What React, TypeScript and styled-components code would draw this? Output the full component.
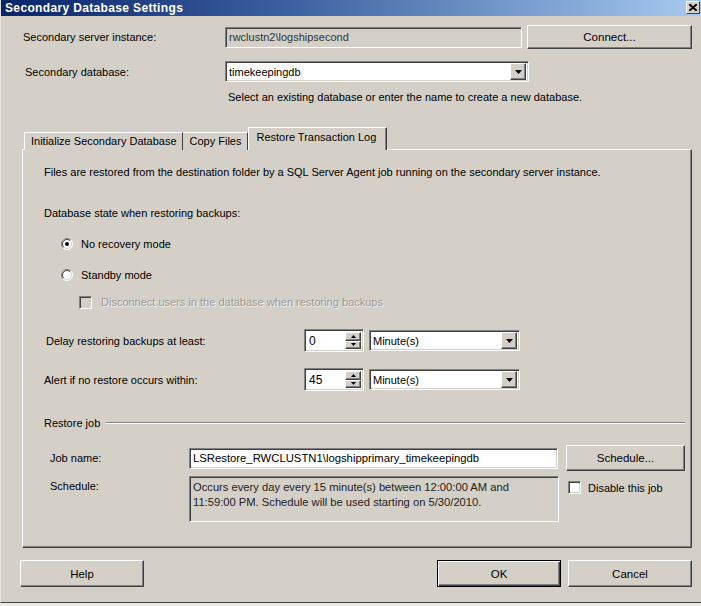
import React from "react";
import styled, { createGlobalStyle, css } from "styled-components";

const Global = createGlobalStyle`
  html, body { margin: 0; padding: 0; background: #ecebe8; }
  body {
    font-family: "Liberation Sans", Arial, sans-serif;
    font-size: 11px;
    color: #000;
  }
  * { box-sizing: border-box; }
`;

const Window = styled.div`
  width: 701px;
  height: 603px;
  background: #d4d0c8;
  border-left: 1px solid #e4e1db;
  border-bottom: 1px solid #404040;
  display: flex;
  flex-direction: column;
`;

const TitleBar = styled.div`
  height: 16px;
  flex: none;
  display: flex;
  align-items: center;
  justify-content: space-between;
  padding: 0 1px 0 4px;
  background: linear-gradient(to right, #0a246a 0%, #3a5f9f 40%, #a6caf0 100%);
  color: #fff;
  font-weight: bold;
  font-size: 12px;
  letter-spacing: 0.35px;
`;

const CloseBtn = styled.div`
  width: 14px;
  height: 13px;
  margin-top: -2px;
  background: #d4d0c8;
  border-top: 1px solid #fff;
  border-left: 1px solid #fff;
  border-right: 1px solid #404040;
  border-bottom: 1px solid #404040;
  display: flex;
  align-items: center;
  justify-content: center;
`;

const TopArea = styled.div`
  padding-left: 22px;
  display: flex;
  flex-direction: column;
`;

const Row = styled.div<{ $mt: number; $h: number }>`
  margin-top: ${(p) => p.$mt}px;
  height: ${(p) => p.$h}px;
  display: flex;
  align-items: center;
`;

const Label = styled.div<{ $w: number; $pl?: number; $pt?: number }>`
  width: ${(p) => p.$w}px;
  padding-left: ${(p) => p.$pl ?? 0}px;
  padding-top: ${(p) => p.$pt ?? 0}px;
  flex: none;
  white-space: nowrap;
`;

const sunken = css`
  border-top: 1px solid #808080;
  border-left: 1px solid #808080;
  border-right: 1px solid #fff;
  border-bottom: 1px solid #fff;
  box-shadow: inset 1px 1px 0 #404040, inset -1px -1px 0 #d4d0c8;
`;

const raised = css`
  background: #d4d0c8;
  border-top: 1px solid #fff;
  border-left: 1px solid #fff;
  border-right: 1px solid #404040;
  border-bottom: 1px solid #404040;
  box-shadow: inset -1px -1px 0 #808080;
`;

const TextBox = styled.div<{ $w: number; $h?: number; $readonly?: boolean; $big?: boolean }>`
  ${sunken};
  width: ${(p) => p.$w}px;
  height: ${(p) => p.$h ?? 21}px;
  flex: none;
  background: ${(p) => (p.$readonly ? "#d4d0c8" : "#fff")};
  color: ${(p) => (p.$readonly ? "#333" : "#000")};
  font-size: ${(p) => (p.$big ? 11.3 : 11)}px;
  display: flex;
  align-items: center;
  padding-left: 3px;
  white-space: nowrap;
  overflow: hidden;
`;

const Combo = styled.div<{ $w: number }>`
  ${sunken};
  width: ${(p) => p.$w}px;
  height: 21px;
  flex: none;
  background: #fff;
  display: flex;
  align-items: center;
  padding: 2px;
`;

const ComboText = styled.div`
  flex: 1;
  padding-left: 1px;
  white-space: nowrap;
`;

const DropBtn = styled.div`
  ${raised};
  width: 16px;
  height: 17px;
  display: flex;
  align-items: center;
  justify-content: center;
  flex: none;
`;

const Button = styled.div<{ $w: number; $h: number; $ml?: number; $default?: boolean }>`
  ${raised};
  width: ${(p) => p.$w}px;
  height: ${(p) => p.$h}px;
  margin-left: ${(p) => p.$ml ?? 0}px;
  flex: none;
  display: flex;
  align-items: center;
  justify-content: center;
  font-size: 11.5px;
  ${(p) =>
    p.$default &&
    css`
      border: 1px solid #000;
      box-shadow: inset 1px 1px 0 #fff, inset -1px -1px 0 #404040, inset -2px -2px 0 #808080;
    `}
`;

const Hint = styled.div`
  margin-top: 8px;
  padding-left: 205px;
  line-height: 14px;
  white-space: nowrap;
`;

const TabStrip = styled.div`
  margin-top: 24px;
  margin-left: 23px;
  height: 22px;
  display: flex;
  align-items: flex-end;
  position: relative;
  z-index: 1;
  margin-bottom: -1px;
`;

const Tab = styled.div<{ $active?: boolean }>`
  height: ${(p) => (p.$active ? 23 : 18)}px;
  padding: ${(p) => (p.$active ? "3px 10px 0 8px" : "2px 5px 0 6px")};
  background: #d4d0c8;
  border-top: 1px solid #fff;
  border-left: 1px solid ${(p) => (p.$active ? "#fff" : "#d4d0c8")};
  border-right: 1px solid #404040;
  box-shadow: ${(p) => (p.$active ? "inset -1px 0 0 #808080" : "none")};
  white-space: nowrap;
  &:first-child {
    border-left: 1px solid #fff;
  }
`;

const Panel = styled.div`
  margin-left: 21px;
  width: 670px;
  height: 399px;
  flex: none;
  border-top: 1px solid #fff;
  border-left: 1px solid #fff;
  border-right: 1px solid #404040;
  border-bottom: 1px solid #404040;
  box-shadow: inset -1px -1px 0 #808080;
  display: flex;
  flex-direction: column;
  padding-left: 21px;
`;

const Line = styled.div<{ $mt: number; $pl?: number }>`
  margin-top: ${(p) => p.$mt}px;
  padding-left: ${(p) => p.$pl ?? 0}px;
  height: 14px;
  line-height: 14px;
  white-space: nowrap;
  display: flex;
  align-items: center;
`;

const OptionLabel = styled.span<{ $gap: number; $disabled?: boolean }>`
  margin-left: ${(p) => p.$gap}px;
  color: ${(p) => (p.$disabled ? "#9a9893" : "#000")};
  text-shadow: ${(p) => (p.$disabled ? "1px 1px 0 #f4f2ee" : "none")};
`;

const CheckBox = styled.div<{ $disabled?: boolean }>`
  ${sunken};
  width: 13px;
  height: 13px;
  flex: none;
  background: ${(p) => (p.$disabled ? "#d4d0c8" : "#fff")};
`;

const Spinner = styled.div`
  ${sunken};
  width: 60px;
  height: 23px;
  flex: none;
  background: #fff;
  display: flex;
  align-items: stretch;
  padding: 2px;
`;

const SpinText = styled.div`
  flex: 1;
  display: flex;
  align-items: center;
  padding-left: 2px;
  font-size: 12px;
`;

const SpinCol = styled.div`
  width: 16px;
  display: flex;
  flex-direction: column;
`;

const SpinBtn = styled.div`
  ${raised};
  flex: 1;
  display: flex;
  align-items: center;
  justify-content: center;
`;

const Gap = styled.div<{ $w: number }>`
  width: ${(p) => p.$w}px;
  flex: none;
`;

const GroupHeader = styled.div`
  margin-top: 25px;
  height: 14px;
  display: flex;
  align-items: center;
  padding-right: 6px;
`;

const Etched = styled.div`
  flex: 1;
  margin-left: 6px;
  height: 2px;
  border-top: 1px solid #808080;
  border-bottom: 1px solid #fff;
`;

const ScheduleRow = styled.div`
  margin-top: 5px;
  display: flex;
  align-items: flex-start;
`;

const ScheduleBox = styled.div`
  ${sunken};
  width: 370px;
  height: 46px;
  flex: none;
  background: #d4d0c8;
  padding: 3px 3px 0 3px;
  font-size: 11.2px;
  line-height: 15px;
  color: #222;
`;

const SideCheck = styled.div`
  margin-left: 9px;
  margin-top: 5px;
  display: flex;
  align-items: center;
`;

const ButtonBar = styled.div`
  margin-top: 12px;
  padding-left: 19px;
  display: flex;
`;

const Spacer = styled.div`
  flex: 1;
  max-width: 293px;
`;

const DownArrow = () => (
  <svg width="7" height="4" viewBox="0 0 7 4">
    <path d="M0 0h7L3.5 4z" fill="#000" />
  </svg>
);

const SmallArrow = ({ up }: { up?: boolean }) => (
  <svg width="5" height="3" viewBox="0 0 5 3">
    <path d={up ? "M0 3h5L2.5 0z" : "M0 0h5L2.5 3z"} fill="#000" />
  </svg>
);

const Radio = ({ checked }: { checked?: boolean }) => (
  <svg width="12" height="12" viewBox="0 0 12 12" style={{ flex: "none" }}>
    <circle cx="6" cy="6" r="5.5" fill="#fff" />
    <path d="M 2.1 9.9 A 5.5 5.5 0 0 1 9.9 2.1" stroke="#808080" strokeWidth="1" fill="none" />
    <path d="M 2.8 9.2 A 4.5 4.5 0 0 1 9.2 2.8" stroke="#404040" strokeWidth="1" fill="none" />
    <path d="M 9.9 2.1 A 5.5 5.5 0 0 1 2.1 9.9" stroke="#fff" strokeWidth="1" fill="none" />
    <path d="M 9.2 2.8 A 4.5 4.5 0 0 1 2.8 9.2" stroke="#d4d0c8" strokeWidth="1" fill="none" />
    {checked && <circle cx="6" cy="6" r="2" fill="#000" />}
  </svg>
);

const CloseX = () => (
  <svg width="8" height="7" viewBox="0 0 8 7">
    <path d="M0 0 L8 7 M8 0 L0 7" stroke="#000" strokeWidth="2" />
  </svg>
);

const SpinField = ({ value }: { value: string }) => (
  <Spinner>
    <SpinText>{value}</SpinText>
    <SpinCol>
      <SpinBtn>
        <SmallArrow up />
      </SpinBtn>
      <SpinBtn>
        <SmallArrow />
      </SpinBtn>
    </SpinCol>
  </Spinner>
);

const ComboField = ({ w, value }: { w: number; value: string }) => (
  <Combo $w={w}>
    <ComboText>{value}</ComboText>
    <DropBtn>
      <DownArrow />
    </DropBtn>
  </Combo>
);

export default function App() {
  return (
    <>
      <Global />
      <Window>
        <TitleBar>
          <span>Secondary Database Settings</span>
          <CloseBtn>
            <CloseX />
          </CloseBtn>
        </TitleBar>

        <TopArea>
          <Row $mt={9} $h={24}>
            <Label $w={202}>Secondary server instance:</Label>
            <TextBox $w={297} $readonly>
              rwclustn2\logshipsecond
            </TextBox>
            <Button $w={165} $h={24} $ml={5}>
              Connect...
            </Button>
          </Row>
          <Row $mt={12} $h={21}>
            <Label $w={202} $pl={2}>
              Secondary database:
            </Label>
            <ComboField w={304} value="timekeepingdb" />
          </Row>
          <Hint>Select an existing database or enter the name to create a new database.</Hint>
        </TopArea>

        <TabStrip>
          <Tab>Initialize Secondary Database</Tab>
          <Tab>Copy Files</Tab>
          <Tab $active>Restore Transaction Log</Tab>
        </TabStrip>

        <Panel>
          <Line $mt={15}>
            Files are restored from the destination folder by a SQL Server Agent job running on the secondary server
            instance.
          </Line>
          <Line $mt={27}>Database state when restoring backups:</Line>
          <Line $mt={17} $pl={17}>
            <Radio checked />
            <OptionLabel $gap={8}>No recovery mode</OptionLabel>
          </Line>
          <Line $mt={17} $pl={17}>
            <Radio />
            <OptionLabel $gap={8}>Standby mode</OptionLabel>
          </Line>
          <Line $mt={13} $pl={35}>
            <CheckBox $disabled />
            <OptionLabel $gap={9} $disabled>
              Disconnect users in the database when restoring backups
            </OptionLabel>
          </Line>

          <Row $mt={20} $h={23}>
            <Label $w={260} $pl={2}>
              Delay restoring backups at least:
            </Label>
            <SpinField value="0" />
            <Gap $w={5} />
            <ComboField w={151} value="Minute(s)" />
          </Row>
          <Row $mt={16} $h={23}>
            <Label $w={260}>Alert if no restore occurs within:</Label>
            <SpinField value="45" />
            <Gap $w={5} />
            <ComboField w={151} value="Minute(s)" />
          </Row>

          <GroupHeader>
            <span>Restore job</span>
            <Etched />
          </GroupHeader>

          <Row $mt={15} $h={26}>
            <Label $w={145} $pl={6}>
              Job name:
            </Label>
            <TextBox $w={369} $big>
              LSRestore_RWCLUSTN1\logshipprimary_timekeepingdb
            </TextBox>
            <Button $w={119} $h={26} $ml={8}>
              Schedule...
            </Button>
          </Row>

          <ScheduleRow>
            <Label $w={145} $pl={6} $pt={4}>
              Schedule:
            </Label>
            <ScheduleBox>
              Occurs every day every 15 minute(s) between 12:00:00 AM and
              <br />
              11:59:00 PM. Schedule will be used starting on 5/30/2010.
            </ScheduleBox>
            <SideCheck>
              <CheckBox />
              <OptionLabel $gap={7}>Disable this job</OptionLabel>
            </SideCheck>
          </ScheduleRow>
        </Panel>

        <ButtonBar>
          <Button $w={124} $h={27}>
            Help
          </Button>
          <Spacer />
          <Button $w={124} $h={27} $default>
            OK
          </Button>
          <Button $w={124} $h={27} $ml={7}>
            Cancel
          </Button>
        </ButtonBar>
      </Window>
    </>
  );
}
